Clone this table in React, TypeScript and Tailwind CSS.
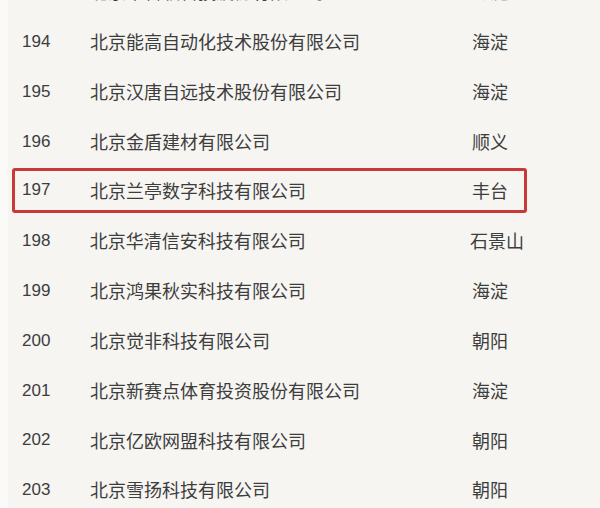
const rows = [
  { no: "193", name: "北京中科软科技股份有限公司", area: "海淀" },
  { no: "194", name: "北京能高自动化技术股份有限公司", area: "海淀" },
  { no: "195", name: "北京汉唐自远技术股份有限公司", area: "海淀" },
  { no: "196", name: "北京金盾建材有限公司", area: "顺义" },
  { no: "197", name: "北京兰亭数字科技有限公司", area: "丰台", mark: true },
  { no: "198", name: "北京华清信安科技有限公司", area: "石景山" },
  { no: "199", name: "北京鸿果秋实科技有限公司", area: "海淀" },
  { no: "200", name: "北京觉非科技有限公司", area: "朝阳" },
  { no: "201", name: "北京新赛点体育投资股份有限公司", area: "海淀" },
  { no: "202", name: "北京亿欧网盟科技有限公司", area: "朝阳" },
  { no: "203", name: "北京雪扬科技有限公司", area: "朝阳" },
];

export default function App() {
  return (
    <div className="flex h-[508px] w-[600px] overflow-hidden bg-[#f6f5f2]">
      <div className="w-[8px] shrink-0 bg-[#fafaf9]" />
      <div className="flex-1 -mt-[33px] text-[#3d3d3d]">
        {rows.map((r) => (
          <div key={r.no} className="flex h-[49.8px] items-center">
            <div
              className={
                r.mark
                  ? "ml-[4px] flex h-[45px] w-[515px] -translate-y-[1px] items-center rounded-[3px] border-[3px] border-[#c9393a]"
                  : "ml-[4px] flex h-[45px] w-[515px] items-center border-[3px] border-transparent"
              }
            >
              <span className="w-[75px] pl-[7px] font-['Liberation_Sans',Arial,sans-serif] text-[17px]">
                {r.no}
              </span>
              <span className="w-[382px] whitespace-nowrap font-['Noto_Sans_CJK_SC',sans-serif] text-[18px]">
                {r.name}
              </span>
              <span className="whitespace-nowrap font-['Noto_Sans_CJK_SC',sans-serif] text-[18px]">{r.area}</span>
            </div>
          </div>
        ))}
      </div>
    </div>
  );
}
